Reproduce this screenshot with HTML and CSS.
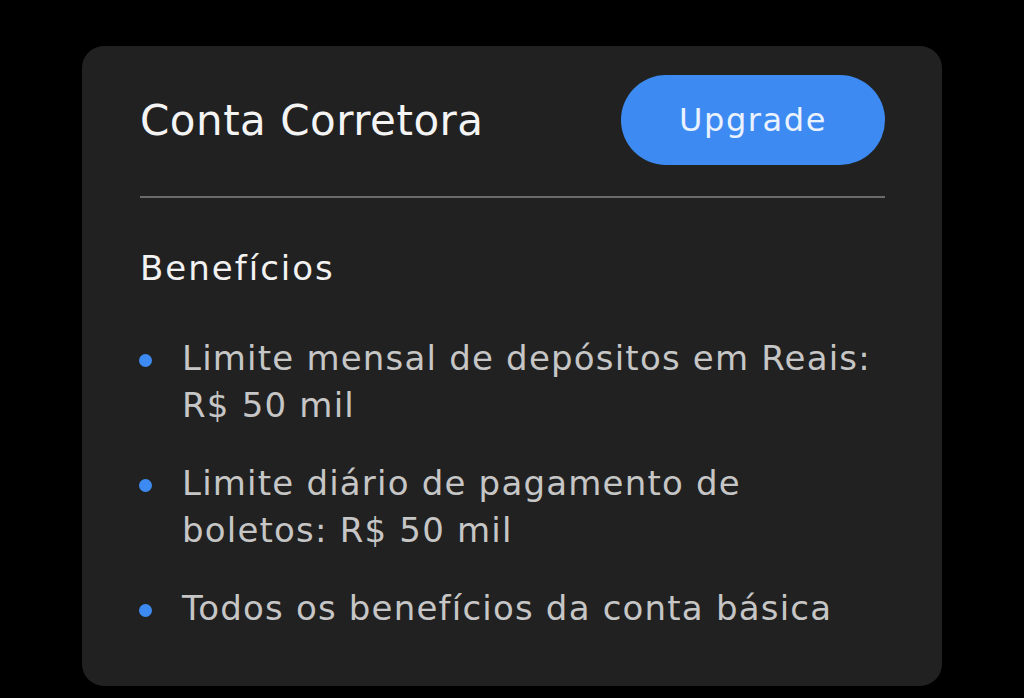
FILE: index.html
```html
<!DOCTYPE html>
<html lang="pt-br">
<head>
    <meta charset="UTF-8">
    <meta name="viewport" content="width=device-width, initial-scale=1.0">
    <title>Conta Corretora</title>
    <link rel="stylesheet" href="styles.css">
</head>
<body>
<div class="card">
    <div class="card-header">
        <h2 class="titulo">Conta Corretora</h2>
        <button class="btn-upgrade">Upgrade</button>
    </div>
    <hr class="divisor">
    <h3 class="subtitulo">Benefícios</h3>
    <ul class="beneficios">
        <li>Limite mensal de depósitos em Reais: R$ 50 mil</li>
        <li>Limite diário de pagamento de boletos: R$ 50 mil</li>
        <li>Todos os benefícios da conta básica</li>
    </ul>
</div>
</body>
</html>
```

FILE: styles.css
```css
body {
    margin: 0;
    background-color: #000;
    font-family: 'DejaVu Sans', Lato, sans-serif;
}

.card {
    width: 860px;
    height: 640px;
    box-sizing: border-box;
    margin: 46px auto 0;
    padding: 29px 57px 0 58px;
    background-color: #212121;
    border-radius: 22px;
}

.card-header {
    display: flex;
    align-items: center;
    justify-content: space-between;
}

.titulo {
    margin: 0;
    font-size: 42px;
    font-weight: normal;
    letter-spacing: 0.5px;
    color: #f4f4f4;
}

.btn-upgrade {
    width: 264px;
    height: 90px;
    padding: 0;
    border: none;
    border-radius: 45px;
    background-color: #3d8bf2;
    color: #eaf2ff;
    font-family: inherit;
    font-size: 32px;
    letter-spacing: 1.6px;
}

.divisor {
    margin: 31px 0 0;
    border: none;
    height: 2px;
    background-color: #6b6b6b;
}

.subtitulo {
    margin: 50px 0 0;
    font-size: 34px;
    font-weight: normal;
    letter-spacing: 2px;
    color: #f2f2f2;
}

.beneficios {
    margin: 47px 0 0;
    padding: 0;
    list-style: none;
}

.beneficios li {
    position: relative;
    padding-left: 42px;
    margin-bottom: 31px;
    font-size: 34px;
    line-height: 47px;
    letter-spacing: 1.2px;
    color: #c6c6c6;
}

.beneficios li::before {
    content: "";
    position: absolute;
    left: -1px;
    top: 19px;
    width: 13px;
    height: 13px;
    border-radius: 50%;
    background-color: #3d8bf2;
}
```
